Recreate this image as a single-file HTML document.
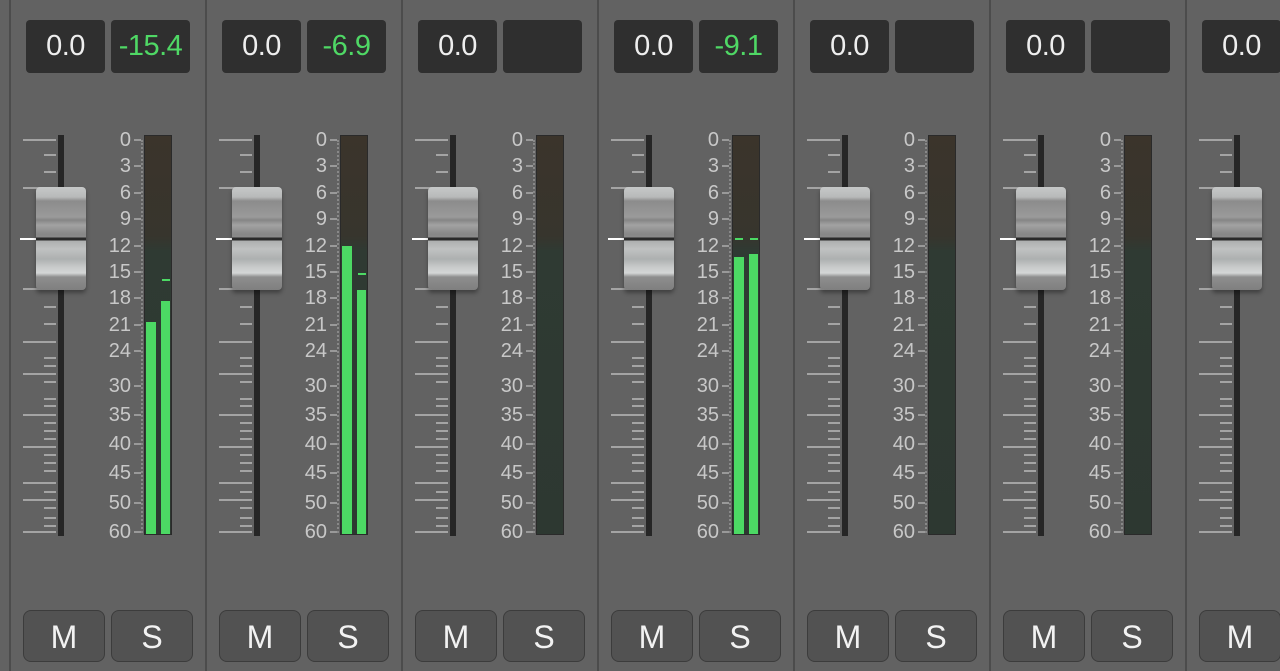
<!DOCTYPE html><html><head><style>
body{margin:0;width:1280px;height:671px;overflow:hidden;background:#626262;font-family:"Liberation Sans",sans-serif;position:relative}
.a{position:absolute}
.line{top:0;width:2px;height:671px;background:#4c4c4c}
.box{top:20px;height:53px;width:79px;background:#2f2f2f;border-radius:4px;color:#eee;font-size:29px;text-align:center;line-height:53px;letter-spacing:-0.5px}
.g{color:#4fd865}
.track{top:135px;width:6px;height:401px;background:#262626}
.tk{height:2px;background:#a4a4a4}
.lab{width:41px;text-align:right;color:#c8c8c8;font-size:20px;line-height:20px}
.meter{top:135px;width:28px;height:400px;background:linear-gradient(#3b342b 0,#37352d 100px,#2f3a33 115px,#2d3831 100%);border:1px solid #2a2a2a;box-sizing:border-box}
.bar{background:#4cd964}
.cap{width:50px;height:103px;border-radius:4px;box-shadow:0 3px 4px rgba(0,0,0,.35);background:linear-gradient(#c6c8c8 0,#b8baba 10px,#8c8c8c 14px,#9a9a9a 30px,#858585 33px,#a2a2a2 38px,#888 47px,#8a8a8a 50px,#2a2a2a 51px,#2a2a2a 53px,#aeb0b0 54px,#c0c2c2 62px,#adb0b0 72px,#c8caca 80px,#d4d6d6 86px,#8e8e8e 90px,#7f7f7f 103px)}
.btn{top:610px;width:82px;height:52px;border:1px solid #3c3c3c;border-radius:8px;background:#525252;color:#f2f2f2;font-size:32px;text-align:center;line-height:52px;box-sizing:border-box}
</style></head><body><div id="r"></div>
<script>
var h='';
var vals=['-15.4','-6.9','','-9.1','','',null];
var meters=[[322,301,null,279],[246,290,null,273],null,[257,254,238,238],null,null,null];
var labs=[[0,139],[3,165],[6,192],[9,218],[12,245],[15,271],[18,297],[21,324],[24,350],[30,385],[35,414],[40,443],[45,472],[50,502],[60,531]];
var longT=[139,187,288,341,373,414,446,482,499,531];
var shortT=[154,171,306,323,357,365,381,398,405,422,430,438,454,462,470,491,507,517,525];
for(var i=0;i<7;i++){var o=10+196*i;
h+='<div class="a line" style="left:'+(o-1)+'px"></div>';
h+='<div class="a box" style="left:'+(o+16)+'px">0.0</div>';
if(vals[i]!==null)h+='<div class="a box g" style="left:'+(o+101)+'px">'+vals[i]+'</div>';
longT.forEach(function(y){h+='<div class="a tk" style="left:'+(o+13)+'px;top:'+y+'px;width:33px"></div>'});
shortT.forEach(function(y){h+='<div class="a tk" style="left:'+(o+34)+'px;top:'+y+'px;width:12px"></div>'});
h+='<div class="a track" style="left:'+(o+48)+'px"></div>';
h+='<div class="a tk" style="left:'+(o+10)+'px;top:238px;width:16px;background:#fff"></div>';
h+='<div class="a cap" style="left:'+(o+26)+'px;top:187px"></div>';
labs.forEach(function(l){h+='<div class="a lab" style="left:'+(o+80)+'px;top:'+(l[1]-9)+'px">'+l[0]+'</div>';h+='<div class="a tk" style="left:'+(o+124)+'px;top:'+l[1]+'px;width:7px;background:#999"></div>'});
h+='<div class="a" style="left:'+(o+131)+'px;top:140px;width:0;height:393px;border-left:2px dotted #888"></div>';
h+='<div class="a meter" style="left:'+(o+134)+'px"></div>';
var m=meters[i];if(m){h+='<div class="a bar" style="left:'+(o+136)+'px;top:'+m[0]+'px;width:10px;height:'+(534-m[0])+'px"></div>';
h+='<div class="a bar" style="left:'+(o+151)+'px;top:'+m[1]+'px;width:9px;height:'+(534-m[1])+'px"></div>';
if(m[2])h+='<div class="a bar" style="left:'+(o+137)+'px;top:'+m[2]+'px;width:8px;height:2px"></div>';
if(m[3])h+='<div class="a bar" style="left:'+(o+152)+'px;top:'+m[3]+'px;width:8px;height:2px"></div>';}
h+='<div class="a btn" style="left:'+(o+13)+'px">M</div>';
if(i<6)h+='<div class="a btn" style="left:'+(o+101)+'px">S</div>';}
document.getElementById('r').innerHTML=h;
</script></body></html>
